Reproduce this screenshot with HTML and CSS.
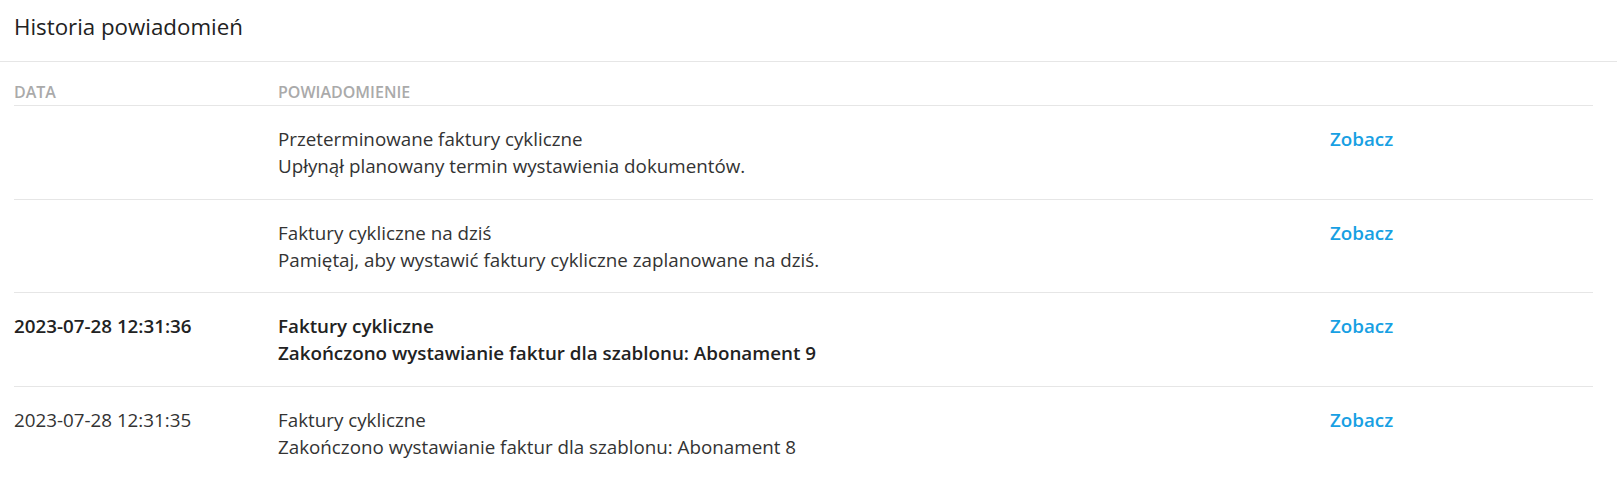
FILE: index.html
```html
<!DOCTYPE html>
<html lang="pl">
<head>
<meta charset="utf-8">
<title>Historia powiadomień</title>
<link rel="stylesheet" href="styles.css">
</head>
<body>
<div class="panel">
  <div class="panel-head"><h1 class="title">Historia powiadomień</h1></div>
  <div class="table">
    <div class="row head">
      <div class="cell">Data</div>
      <div class="cell">Powiadomienie</div>
      <div class="cell"></div>
    </div>
    <div class="row">
      <div class="cell date"></div>
      <div class="cell msg"><div>Przeterminowane faktury cykliczne</div><div>Upłynął planowany termin wystawienia dokumentów.</div></div>
      <div class="cell act"><a class="link" href="#">Zobacz</a></div>
    </div>
    <div class="row">
      <div class="cell date"></div>
      <div class="cell msg"><div>Faktury cykliczne na dziś</div><div>Pamiętaj, aby wystawić faktury cykliczne zaplanowane na dziś.</div></div>
      <div class="cell act"><a class="link" href="#">Zobacz</a></div>
    </div>
    <div class="row unread">
      <div class="cell date">2023-07-28 12:31:36</div>
      <div class="cell msg"><div>Faktury cykliczne</div><div>Zakończono wystawianie faktur dla szablonu: Abonament 9</div></div>
      <div class="cell act"><a class="link" href="#">Zobacz</a></div>
    </div>
    <div class="row">
      <div class="cell date">2023-07-28 12:31:35</div>
      <div class="cell msg"><div>Faktury cykliczne</div><div>Zakończono wystawianie faktur dla szablonu: Abonament 8</div></div>
      <div class="cell act"><a class="link" href="#">Zobacz</a></div>
    </div>
  </div>
</div>
</body>
</html>
```
FILE: styles.css
```css
html, body {
  margin: 0;
  padding: 0;
  background: #fff;
}
body {
  font-family: "Open Sans", "Liberation Sans", sans-serif;
  color: #333;
}
.panel-head {
  border-bottom: 1px solid #e6e6e6;
  padding: 12px 14px 19px;
}
.title {
  margin: 0;
  font-size: 22.3px;
  line-height: 30px;
  font-weight: 400;
  color: #222;
}
.table {
  padding: 20px 24px 0 14px;
}
.row {
  display: grid;
  grid-template-columns: 264px 1fr 263px;
  border-bottom: 1px solid #e6e6e6;
  padding: 20px 0 18.6px;
  font-size: 18.8px;
  line-height: 27px;
}
.row.head {
  padding: 0 0 3px;
  font-size: 16px;
  line-height: 20px;
  font-weight: 600;
  text-transform: uppercase;
  color: #aaa;
}
.row.unread {
  font-weight: 600;
  color: #222;
}
.link {
  color: #17a0e3;
  font-weight: 600;
  text-decoration: none;
}
```
